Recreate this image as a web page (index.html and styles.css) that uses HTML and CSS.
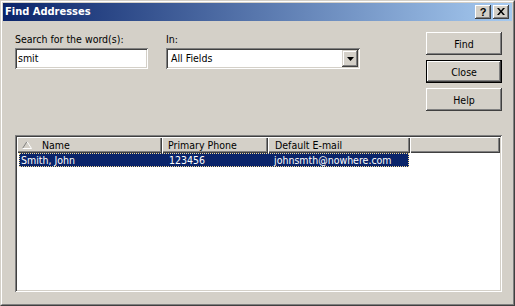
FILE: index.html
```html
<!DOCTYPE html>
<html>
<head>
<meta charset="utf-8">
<link rel="stylesheet" href="styles.css">
</head>
<body>
<div class="window">
  <div class="frame">
    <div class="titlebar">
      <span class="title">Find Addresses</span>
      <div class="tbtns">
        <div class="tbtn help-glyph">?</div>
        <div class="tbtn">
          <svg width="8" height="7" viewBox="0 0 8 7"><path d="M0 0h2l2 2.5 2-2.5h2l-3 3.5 3 3.5h-2l-2-2.5-2 2.5h-2l3-3.5z" fill="#000"/></svg>
        </div>
      </div>
    </div>
    <div class="body">
      <div class="top">
        <div class="fields">
          <div class="field">
            <div class="label">Search for the word(s):</div>
            <div class="input">smit</div>
          </div>
          <div class="field">
            <div class="label">In:</div>
            <div class="select">
              <span class="select-text">All Fields</span>
              <span class="dd"><svg width="7" height="4" viewBox="0 0 7 4"><path d="M0 0h7l-3.5 4z" fill="#000"/></svg></span>
            </div>
          </div>
        </div>
        <div class="buttons">
          <div class="btn">Find</div>
          <div class="btn default">Close</div>
          <div class="btn">Help</div>
        </div>
      </div>
      <div class="list">
        <div class="header">
          <div class="hcell c1"><svg class="sort" width="10" height="8" viewBox="0 0 10 8"><path d="M0.5 7.5L5 0.5" stroke="#808080" fill="none"/><path d="M5 0.5L9.5 7.5H0.5" stroke="#fff" fill="none"/></svg>Name</div>
          <div class="hcell c2">Primary Phone</div>
          <div class="hcell c3">Default E-mail</div>
          <div class="hcell c4"></div>
        </div>
        <div class="row selected">
          <div class="cell r1">Smith, John</div>
          <div class="cell r2">123456</div>
          <div class="cell r3">johnsmth@nowhere.com</div>
        </div>
      </div>
    </div>
  </div>
</div>
</body>
</html>
```

FILE: styles.css
```css
* { box-sizing: border-box; margin: 0; padding: 0; }
html, body { width: 515px; height: 306px; overflow: hidden; }
body {
  background: #D4D0C8;
  font-family: "DejaVu Sans Condensed", "DejaVu Sans", sans-serif;
  font-stretch: condensed;
  font-size: 10.5px;
  color: #000;
}
.window {
  width: 515px;
  height: 306px;
  border: 1px solid;
  border-color: #D4D0C8 #404040 #404040 #D4D0C8;
  background: #D4D0C8;
}
.frame {
  height: 100%;
  border: 1px solid;
  border-color: #fff #808080 #808080 #fff;
  padding: 1px;
  display: flex;
  flex-direction: column;
}
.titlebar {
  height: 18px;
  flex: none;
  background: linear-gradient(to right, #0A246A, #A6CAF0);
  display: flex;
  align-items: center;
  padding: 0 3px 0 2px;
}
.title {
  flex: 1;
  color: #fff;
  font-weight: bold;
  font-size: 11px;
  line-height: 18px;
}
.tbtns { display: flex; gap: 2px; }
.tbtn {
  width: 16px;
  height: 14px;
  background: #D4D0C8;
  box-shadow: inset -1px -1px #404040, inset 1px 1px #fff, inset -2px -2px #808080;
  display: flex;
  align-items: center;
  justify-content: center;
  padding-bottom: 1px;
}
.help-glyph {
  font-family: "Liberation Sans", sans-serif;
  font-weight: bold;
  font-size: 11px;
  line-height: 12px;
}
.body {
  flex: 1;
  display: flex;
  flex-direction: column;
  padding: 11px 10px 11px 12px;
}
.top { display: flex; justify-content: space-between; flex: none; }
.fields { display: flex; gap: 18px; margin-top: 1px; }
.label { line-height: 13px; margin-bottom: 2px; }
.input {
  width: 133px;
  height: 21px;
  background: #fff;
  padding-left: 3px;
  line-height: 21px;
  box-shadow: inset 1px 1px #808080, inset -1px -1px #fff, inset 2px 2px #404040, inset -2px -2px #D4D0C8;
}
.select {
  width: 194px;
  height: 21px;
  background: #fff;
  padding: 2px;
  display: flex;
  box-shadow: inset 1px 1px #808080, inset -1px -1px #fff, inset 2px 2px #404040, inset -2px -2px #D4D0C8;
}
.select-text { flex: 1; padding-left: 3px; line-height: 17px; }
.dd {
  width: 16px;
  height: 17px;
  background: #D4D0C8;
  box-shadow: inset -1px -1px #404040, inset 1px 1px #D4D0C8, inset -2px -2px #808080, inset 2px 2px #fff;
  display: flex;
  align-items: center;
  justify-content: center;
}
.buttons { display: flex; flex-direction: column; gap: 5px; width: 76px; }
.btn {
  height: 23px;
  background: #D4D0C8;
  box-shadow: inset -1px -1px #404040, inset 1px 1px #fff, inset -2px -2px #808080;
  display: flex;
  align-items: center;
  justify-content: center;
}
.btn.default {
  box-shadow: inset 0 0 0 1px #000, inset -2px -2px #404040, inset 2px 2px #fff, inset -3px -3px #808080;
}
.list {
  margin-top: 24px;
  flex: 1;
  background: #fff;
  padding: 2px;
  box-shadow: inset 1px 1px #808080, inset -1px -1px #fff, inset 2px 2px #404040, inset -2px -2px #D4D0C8;
  display: flex;
  flex-direction: column;
}
.header { display: flex; height: 16px; flex: none; }
.hcell {
  height: 16px;
  background: #D4D0C8;
  box-shadow: inset 1px 1px #fff, inset -1px -1px #404040, inset -2px -2px #808080;
  line-height: 15px;
  white-space: nowrap;
  display: flex;
  align-items: center;
}
.c1 { width: 145px; padding-left: 5px; }
.c2 { width: 106px; padding-left: 6px; }
.c3 { width: 142px; padding-left: 7px; }
.c4 { flex: 1; }
.sort { margin-right: 10px; margin-top: -1px; }
.row {
  display: flex;
  margin-left: 2px;
  width: 390px;
  height: 14px;
  line-height: 12px;
  white-space: nowrap;
}
.row.selected {
  background: #0A246A;
  color: #fff;
  border: 1px dotted #F5DB95;
}
.r1 { width: 142px; padding-left: 1px; }
.r2 { width: 106px; padding-left: 7px; }
.r3 { width: 140px; padding-left: 6px; }
```
